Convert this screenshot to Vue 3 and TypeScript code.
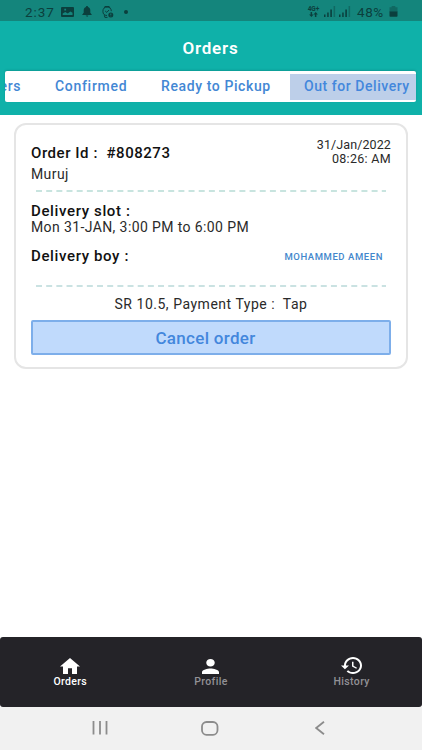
<script setup lang="ts">
interface Tab {
  label: string
  kind: string
}

const tabs: Tab[] = [
  { label: 'Orders', kind: 'first' },
  { label: 'Confirmed', kind: 'confirmed' },
  { label: 'Ready to Pickup', kind: 'ready' },
  { label: 'Out for Delivery', kind: 'selected' },
]
</script>

<template>
  <main class="screen">
    <div class="status">
      <span class="clock">2:37</span>
      <svg class="st-picture" width="13" height="10" viewBox="0 0 13 10">
        <path fill="currentColor" fill-rule="evenodd" d="M1 0h11a1 1 0 0 1 1 1v8a1 1 0 0 1-1 1H1a1 1 0 0 1-1-1V1a1 1 0 0 1 1-1zm.7 8h9.8V5.7L9.3 4.4 6.8 6.6 4.2 5 1.700 6.500zM3.300 1.800v1.600h1.800V1.800z" />
      </svg>
      <svg class="st-bell" width="10" height="11" viewBox="0 0 10 11">
        <path fill="currentColor" d="M5 0c.7 0 1 .4 1 1 1.500.5 2.300 1.700 2.300 3.300v2.500L9.700 8.500v.5H.3v-.5l1.400-1.700V4.300C1.700 2.700 2.500 1.500 4 1c0-.6.3-1 1-1zM3.800 9.500h2.400c0 .8-.5 1.200-1.200 1.200s-1.200-.4-1.200-1.200z" />
      </svg>
      <svg class="st-watch" width="13" height="12" viewBox="0 0 13 12">
        <g fill="none" stroke="currentColor" stroke-width="1">
          <path d="M6 9.500A4.200 4.200 0 1 1 10.300 5.200M3.300 1.800l.6-1.300h4.300l.6 1.300M3.300 9.200l.6 2.200h2.600M4.200 5l1.600 1.400 2.200-2.400" />
        </g>
        <circle cx="9.800" cy="8.900" r="2.500" fill="currentColor" />
        <path d="M9.800 7.500v1.600M9.800 9.700v.7" stroke="#14857c" stroke-width=".8" />
      </svg>
      <span class="st-dot"></span>
      <div class="network"><span>4G+</span>
        <svg width="9" height="5" viewBox="0 0 9 5"><path fill="currentColor" d="M1.600 0h1.500v2.500h1.500L2.400 5 .1 2.500h1.500zM5.900 5h1.500V2.500h1.500L6.700 0 4.500 2.500h1.400z" /></svg>
      </div>
      <svg v-for="n in 2" :key="n" class="signal" width="12" height="11" viewBox="0 0 12 11">
        <path fill="currentColor" d="M0 8.500h1.500V11H0zM3.200 6.500h1.500V11H3.200zM6.300 3.500h1.600V11H6.300z" />
        <path fill="currentColor" opacity=".4" d="M9.600 0h1.500v11H9.600z" />
      </svg>
      <span class="percent">48%</span>
      <svg class="battery" width="9" height="11" viewBox="0 0 9 11">
        <path fill="currentColor" opacity=".4" d="M2.700 0h3.600v1.300H8.500V6H.5V1.300h2.200z" />
        <path fill="currentColor" d="M.5 5.500h8V10a.7.7 0 0 1-.7.7H1.200A.7.7 0 0 1 .5 10z" />
      </svg>
    </div>

    <header class="header">
      <h1>Orders</h1>
      <nav class="tabs">
        <button v-for="t in tabs" :key="t.label" class="tab" :class="t.kind">{{ t.label }}</button>
      </nav>
    </header>

    <section class="content">
      <article class="card">
        <div class="order">
          <div>
            <h2 class="order-id">Order Id :&nbsp; #808273</h2>
            <p class="store">Muruj</p>
          </div>
          <div class="date"><span class="day">31/Jan/2022</span><span class="time">08:26: AM</span></div>
        </div>
        <svg class="dashes" width="350" height="2"><path d="M0 1H350" stroke="#b7dcd5" stroke-width="1.400" stroke-dasharray="6 4.170" /></svg>
        <h2 class="slot-title">Delivery slot :</h2>
        <p class="slot">Mon 31-JAN, 3:00 PM to 6:00 PM</p>
        <div class="boy">
          <h2 class="boy-title">Delivery boy :</h2>
          <span class="boy-name">MOHAMMED AMEEN</span>
        </div>
        <svg class="dashes" width="350" height="2"><path d="M0 1H350" stroke="#b9d9d9" stroke-width="1.400" stroke-dasharray="6 4.170" /></svg>
        <p class="payment">SR 10.5, Payment Type :&nbsp; Tap</p>
        <button class="cancel">Cancel order</button>
      </article>
    </section>

    <nav class="bottom">
      <div class="item active">
        <svg width="20" height="16" viewBox="2 3 20 17" preserveAspectRatio="none"><path fill="#fff" d="M10 20v-6h4v6h5v-8h3L12 3 2 12h3v8z" /></svg>
        <span>Orders</span>
      </div>
      <div class="item profile">
        <svg width="17" height="15" viewBox="4 4 16 16" preserveAspectRatio="none"><path fill="#fff" d="M12 12c2.210 0 4-1.790 4-4s-1.790-4-4-4-4 1.790-4 4 1.790 4 4 4zm0 2c-2.670 0-8 1.340-8 4v2h16v-2c0-2.660-5.330-4-8-4z" /></svg>
        <span>Profile</span>
      </div>
      <div class="item history">
        <svg width="21" height="17" viewBox="1 3 21 18" preserveAspectRatio="none"><path fill="#fff" d="M13 3c-4.970 0-9 4.030-9 9H1l3.890 3.890.07.14L9 12H6c0-3.870 3.130-7 7-7s7 3.130 7 7-3.130 7-7 7c-1.930 0-3.680-.79-4.940-2.060l-1.420 1.420C8.270 19.990 10.510 21 13 21c4.970 0 9-4.030 9-9s-4.030-9-9-9zm-1 5v5l4.280 2.540.72-1.210-3.500-2.080V8H12z" /></svg>
        <span>History</span>
      </div>
    </nav>

    <div class="system">
      <svg width="16" height="14" viewBox="0 0 16 14"><path d="M1.500 0v13.500M8 0v13.500M14.500 0v13.500" stroke="#8c8c8c" stroke-width="1.800" /></svg>
      <svg class="home" width="18" height="15" viewBox="0 0 18 15"><rect x="1" y="1" width="15.500" height="12.800" rx="4.500" fill="none" stroke="#8c8c8c" stroke-width="1.800" /></svg>
      <svg width="10" height="14" viewBox="0 0 10 14"><path d="M9 .8 1.200 7 9 13.200" fill="none" stroke="#8c8c8c" stroke-width="1.800" /></svg>
    </div>
  </main>
</template>

<style>
body {
  margin: 0;
  background: #fff;
}
</style>

<style scoped>
* {
  box-sizing: border-box;
}
h1,
h2,
p {
  margin: 0;
  white-space: nowrap;
}
button {
  font: inherit;
  border: 0;
  padding: 0;
  white-space: nowrap;
}
svg {
  display: block;
  flex: none;
}
.screen {
  width: 422px;
  height: 750px;
  display: flex;
  flex-direction: column;
  overflow: hidden;
  background: #fff;
  color: #2a2a2a;
  font-family: Roboto, sans-serif;
}
.status {
  height: 21px;
  flex: none;
  display: flex;
  align-items: center;
  padding: 2px 24px 0 25px;
  background: #14857c;
  color: #0b3f3d;
}
.clock {
  width: 36px;
  font-size: 13.500px;
  letter-spacing: .9px;
}
.st-bell {
  margin-left: 8px;
}
.st-watch {
  margin-left: 9px;
}
.st-dot {
  width: 4px;
  height: 4px;
  margin-left: 10px;
  border-radius: 50%;
  background: currentColor;
}
.network {
  width: 13px;
  margin-left: auto;
  display: flex;
  flex-direction: column;
  align-items: center;
  font-size: 6.500px;
  font-weight: 700;
  line-height: 6px;
}
.signal {
  margin-left: 3.500px;
}
.percent {
  width: 29px;
  margin: 0 3px 0 6px;
  font-size: 13.500px;
  letter-spacing: .6px;
}
.header {
  height: 94px;
  flex: none;
  padding: 0 6px 0 5px;
  background: #0fb1a9;
}
h1 {
  height: 50px;
  padding-top: 17px;
  text-align: center;
  color: #fff;
  font-size: 17px;
  line-height: 20px;
  font-weight: 600;
  letter-spacing: .8px;
}
.tabs {
  height: 31px;
  display: flex;
  justify-content: flex-end;
  overflow: hidden;
  border-radius: 2px;
  background: #fff;
  box-shadow: 0 -1px 2px #0a6c6855;
  padding: 3px 0 2px;
}
.tab {
  flex: none;
  color: #4387d4;
  background: transparent;
  font-size: 14px;
  font-weight: 500;
  text-align: left;
  height: 26px;
  padding-bottom: 2px;
  line-height: 24px;
  letter-spacing: .6px;
}
.first {
  width: 50px;
  text-align: right;
  margin-right: 34px;
}
.confirmed {
  width: 106px;
  letter-spacing: .7px;
}
.ready {
  width: 129px;
}
.selected {
  width: 126px;
  padding-left: 14px;
  letter-spacing: .55px;
  color: #4387dc;
  background: #bdcfe9;
}
.content {
  flex: 1;
  padding: 8px 14px;
}
.card {
  height: 246px;
  display: flex;
  flex-direction: column;
  padding: 12px 15px 12px;
  border: 2px solid #e5e5e5;
  border-radius: 12px;
}
h2 {
  color: #111;
  font-size: 15px;
  line-height: 18px;
  font-weight: 500;
  letter-spacing: .63px;
}
.order {
  height: 54px;
  display: flex;
  justify-content: space-between;
}
.order-id {
  margin-top: 7px;
  letter-spacing: .55px;
}
.store {
  margin-top: 3px;
  font-size: 14px;
  line-height: 18px;
  letter-spacing: .4px;
}
.date {
  display: flex;
  flex-direction: column;
  align-items: flex-end;
  font-size: 12.500px;
  line-height: 14px;
  padding-top: 1px;
}
.day {
  letter-spacing: .1px;
}
.time {
  letter-spacing: .3px;
}
.dashes {
  margin-left: 5px;
}
.slot-title {
  margin-top: 10px;
}
.slot {
  font-size: 14px;
  line-height: 16px;
  margin-top: -1px;
  letter-spacing: .39px;
}
.boy {
  height: 18px;
  display: flex;
  justify-content: space-between;
  align-items: center;
  margin: 12px 8px 20px 0;
}
.boy-name {
  color: #4387cc;
  font-size: 9.500px;
  font-weight: 500;
  letter-spacing: .57px;
}
.payment {
  height: 33px;
  line-height: 34px;
  text-align: center;
  font-size: 14px;
  letter-spacing: .52px;
}
.cancel {
  height: 35px;
  flex: none;
  border: 2px solid #7daeea;
  border-radius: 2px;
  background: #c0dafc;
  color: #4387dc;
  font-size: 17px;
  font-weight: 500;
  padding-right: 11px;
  letter-spacing: .3px;
}
.bottom {
  height: 70px;
  flex: none;
  display: grid;
  grid-template-columns: repeat(3, 1fr);
  border-radius: 3px;
  background: #242328;
  color: #929196;
}
.item {
  display: flex;
  flex-direction: column;
  align-items: center;
  padding-top: 20px;
  font-size: 10.500px;
  font-weight: 500;
  letter-spacing: .35px;
}
.item span {
  height: 13px;
  line-height: 13px;
  margin-top: 1px;
}
.active svg {
  margin-top: 1px;
}
.profile svg {
  margin-top: 2px;
}
.active {
  color: #fff;
}
.system {
  height: 43px;
  flex: none;
  display: flex;
  justify-content: space-between;
  padding: 14px 97px 0 92px;
  background: #f1f1f1;
}
.home {
  margin: 0 4px 0 0;
}
</style>
